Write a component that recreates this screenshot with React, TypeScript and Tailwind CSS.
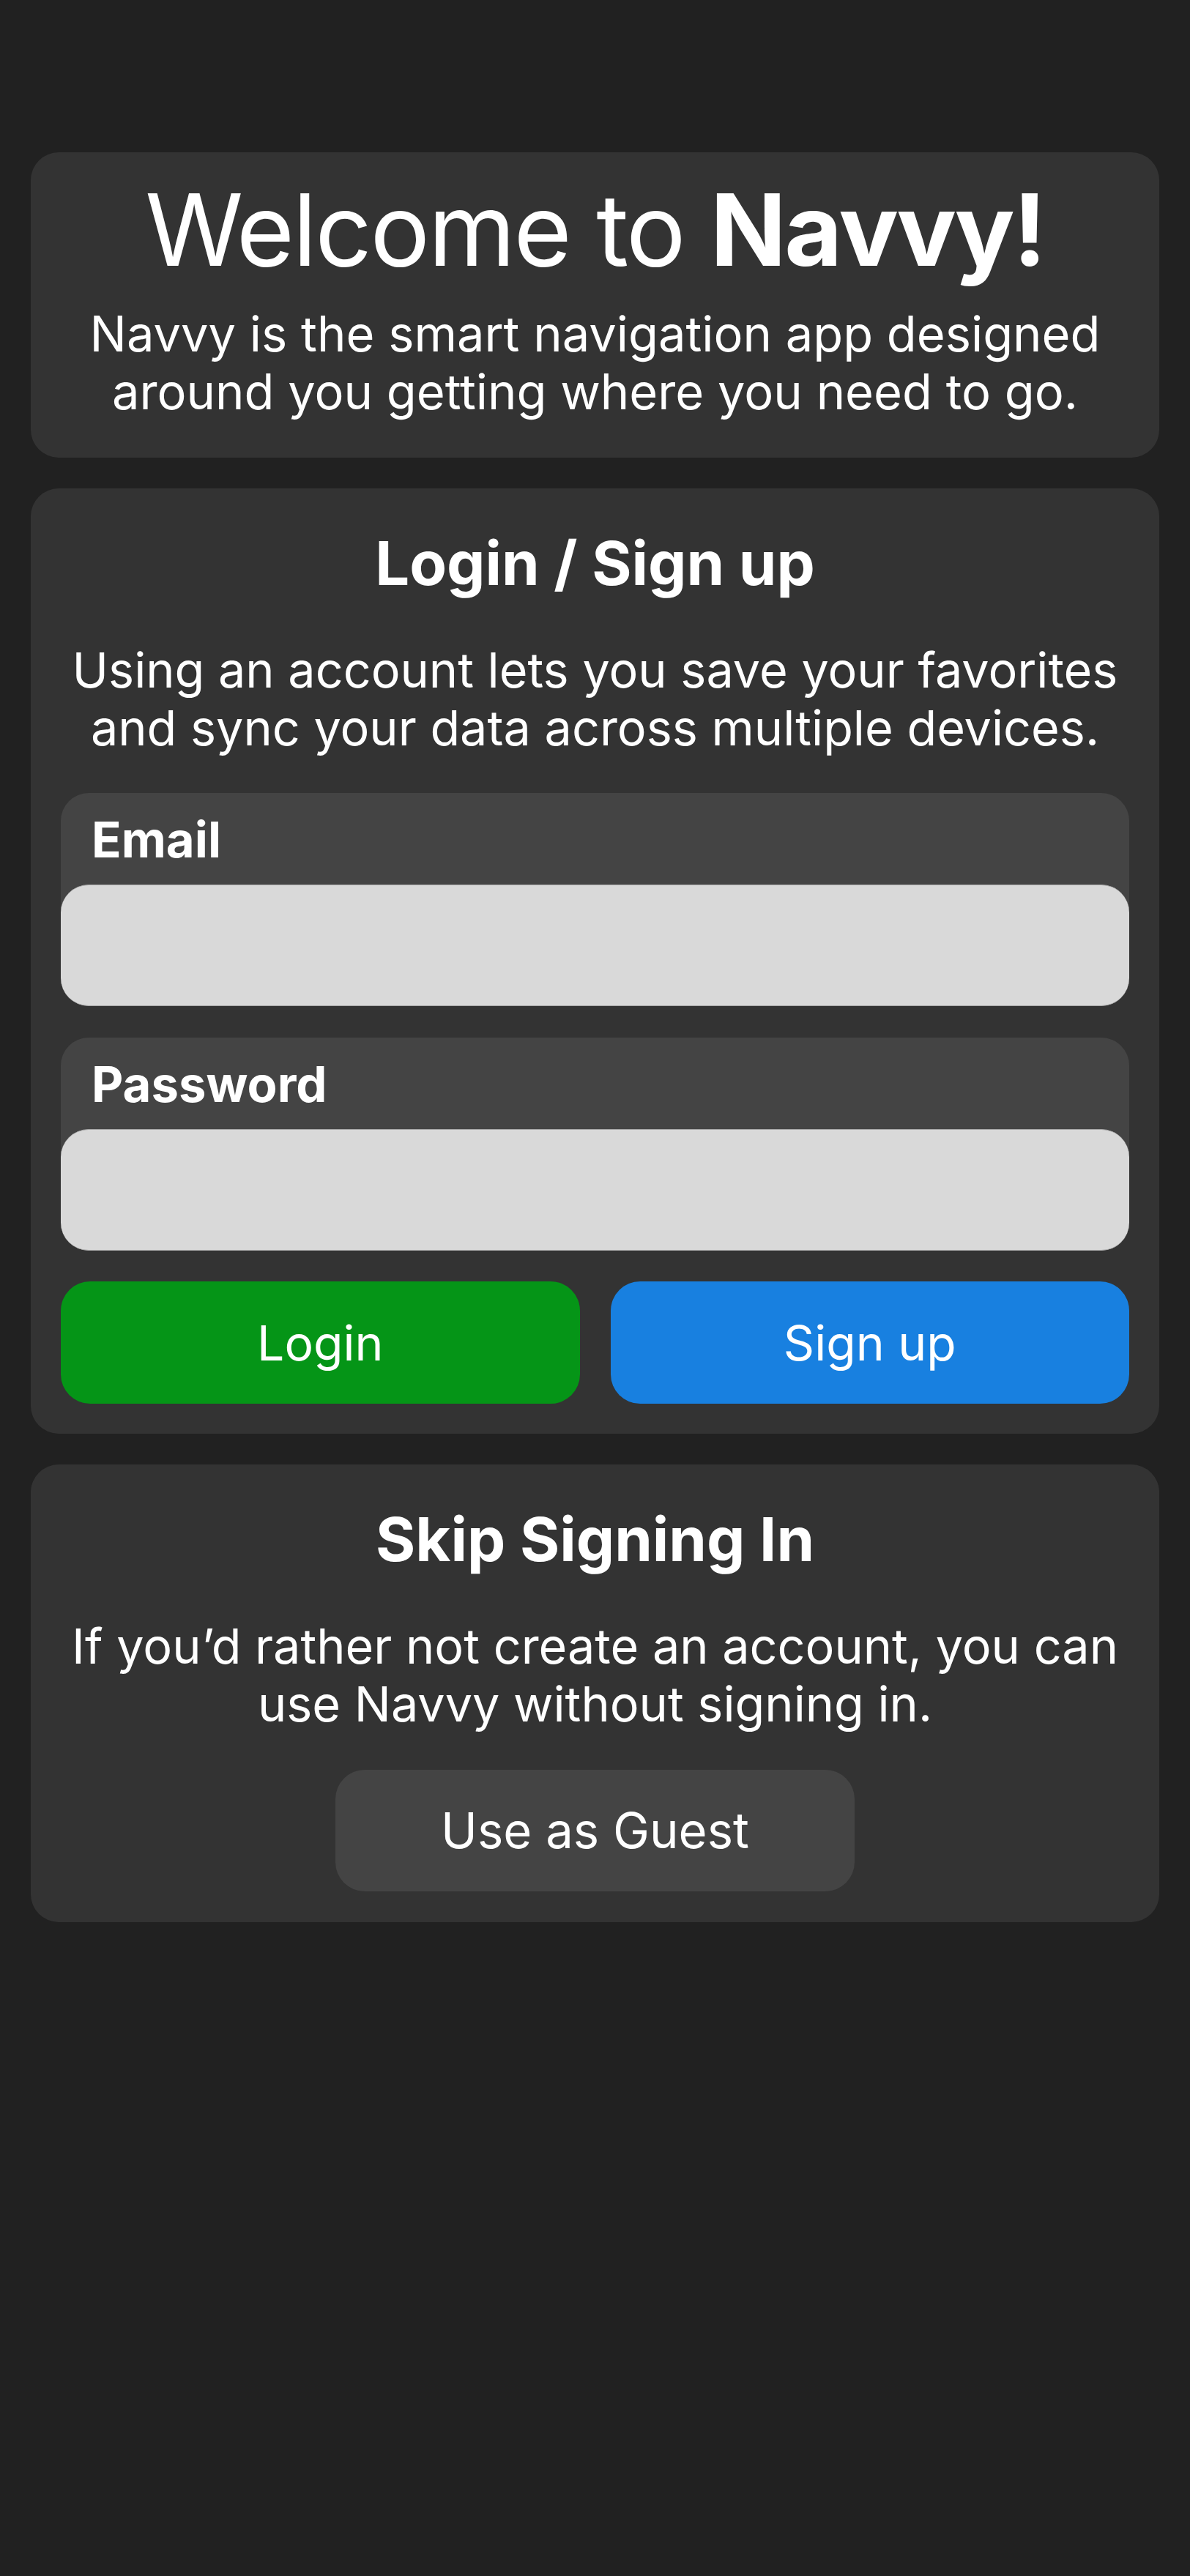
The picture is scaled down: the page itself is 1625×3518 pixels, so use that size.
import React from "react";

/**
 * Navvy welcome screen
 * - intro card, login/sign up form, guest option
 */

function Field({ label, type }: { label: string; type: string }) {
  return (
    <div className="flex flex-col rounded-[38px] bg-[#444444]">
      <label className="pl-[42px] pt-[24px] pb-[21px] text-[67px] leading-[80px] font-bold text-white">
        {label}
      </label>
      <input
        type={type}
        className="h-[166px] w-full rounded-[38px] border-y border-[#a9a9a9] bg-[#d9d9d9] px-[40px] text-[60px] text-black outline-none"
      />
    </div>
  );
}

function Card({ children, className }: { children: React.ReactNode; className: string }) {
  return <section className={"rounded-[38px] bg-[#333333] px-[41px] " + className}>{children}</section>;
}

export default function App() {
  return (
    <div className="min-h-screen bg-[#212121] px-[42px] pt-[208px] font-['Inter',sans-serif] text-white">
      <div className="flex flex-col gap-[42px]">
        <Card className="pt-[23px] pb-[51px] text-center">
          <h1 className="text-[136px] leading-[165px] font-normal tracking-[-2.4px]">
            Welcome to <span className="font-bold">Navvy!</span>
          </h1>
          <p className="mt-[20px] text-[66.8px] leading-[79px]">
            Navvy is the smart navigation app designed
            <br />
            around you getting where you need to go.
          </p>
        </Card>

        <Card className="pt-[52px] pb-[41px]">
          <h2 className="text-center text-[83px] leading-[100px] font-bold">Login / Sign up</h2>
          <p className="mt-[57px] text-center text-[66.5px] leading-[79px]">
            Using an account lets you save your favorites
            <br />
            and sync your data across multiple devices.
          </p>
          <div className="mt-[49px] flex flex-col gap-[43px]">
            <Field label="Email" type="email" />
            <Field label="Password" type="password" />
          </div>
          <div className="mt-[42px] flex gap-[42px]">
            <button className="h-[167px] flex-1 rounded-[40px] bg-[#059517] text-[66px] leading-[80px] text-white">
              Login
            </button>
            <button className="h-[167px] flex-1 rounded-[40px] bg-[#1880e0] text-[66px] leading-[80px] text-white">
              Sign up
            </button>
          </div>
        </Card>

        <Card className="pt-[52px] pb-[42px]">
          <h2 className="text-center text-[83px] leading-[100px] font-bold">Skip Signing In</h2>
          <p className="mt-[57px] text-center text-[66.5px] leading-[79px]">
            If you’d rather not create an account, you can
            <br />
            use Navvy without signing in.
          </p>
          <div className="mt-[50px] flex justify-center">
            <button className="h-[166px] w-[709px] rounded-[40px] bg-[#444444] text-[67px] leading-[80px] text-white">
              Use as Guest
            </button>
          </div>
        </Card>
      </div>
    </div>
  );
}
